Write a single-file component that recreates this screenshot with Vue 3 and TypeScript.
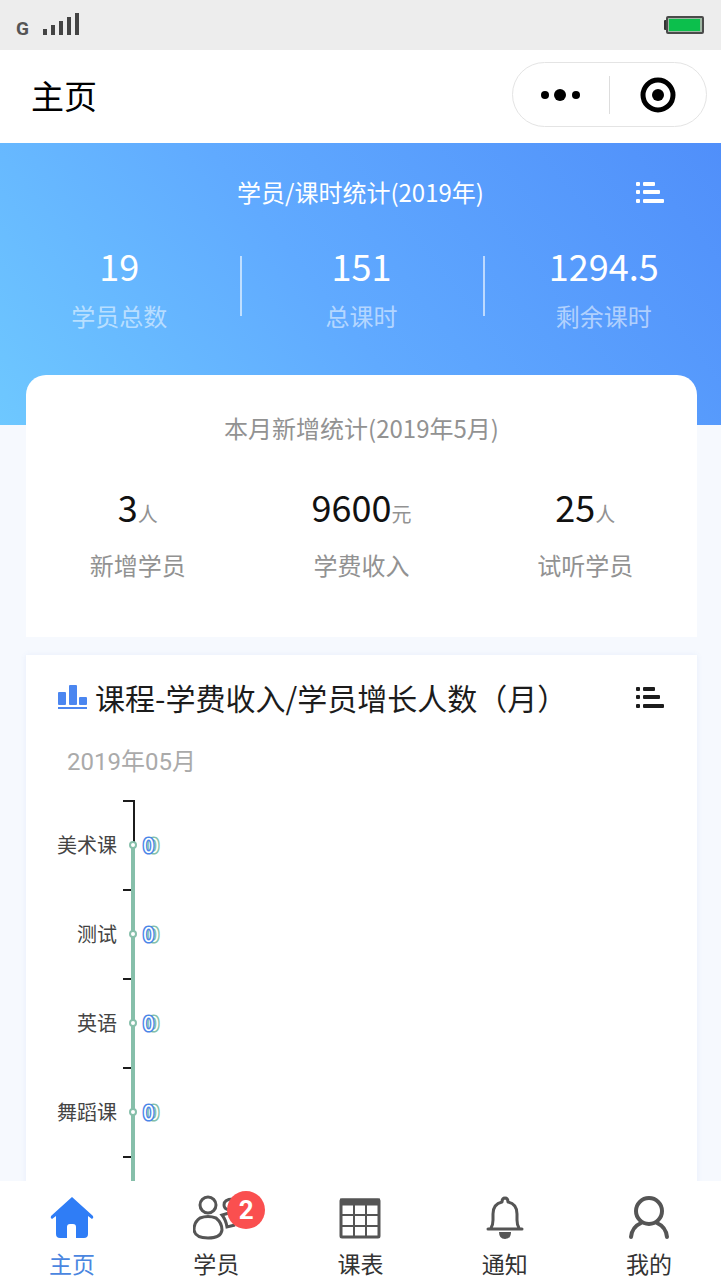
<script setup lang="ts">
interface Stat { value: string; label: string; unit?: string }
interface Tab { key: string; label: string; badge?: number }

const totals: Stat[] = [
  { value: '19', label: '学员总数' },
  { value: '151', label: '总课时' },
  { value: '1294.5', label: '剩余课时' },
]
const monthly: Stat[] = [
  { value: '3', unit: '人', label: '新增学员' },
  { value: '9600', unit: '元', label: '学费收入' },
  { value: '25', unit: '人', label: '试听学员' },
]
const tabs: Tab[] = [
  { key: 'home', label: '主页' },
  { key: 'students', label: '学员', badge: 2 },
  { key: 'schedule', label: '课表' },
  { key: 'notice', label: '通知' },
  { key: 'mine', label: '我的' },
]

const step = 89
const top = 16
const courses = ['美术课', '测试', '英语', '舞蹈课'].map((name, i) => ({
  name,
  income: 0,
  growth: 0,
  tick: top + i * step,
  mid: top + i * step + 44,
}))
const lastTick = top + courses.length * step
</script>

<template>
  <div class="app">
    <div class="status">
      <div class="signal">
        <span class="net">G</span>
        <svg width="38" height="26" viewBox="0 0 38 26" fill="#444">
          <rect x="1" y="17" width="4" height="6" /><rect x="9" y="13" width="4" height="10" />
          <rect x="17" y="9" width="4" height="14" /><rect x="25" y="5" width="4" height="18" />
          <rect x="33" y="1" width="4" height="22" />
        </svg>
      </div>
      <svg width="42" height="20" viewBox="0 0 42 20">
        <rect x="1" y="5" width="4" height="10" rx="1" fill="#333" />
        <rect x="4" y="2" width="36" height="16" rx="1" fill="#9fb8a4" stroke="#4a4a4a" stroke-width="2" />
        <rect x="6" y="4" width="31" height="12" fill="#0cbf4c" />
      </svg>
    </div>

    <header class="nav">
      <h1>主页</h1>
      <div class="capsule">
        <button type="button" aria-label="更多">
          <svg width="40" height="16" viewBox="0 0 40 16"><circle cx="4" cy="8" r="4" /><circle cx="19" cy="8" r="6" /><circle cx="35" cy="8" r="4" /></svg>
        </button>
        <button type="button" aria-label="关闭">
          <svg width="36" height="36" viewBox="0 0 36 36"><circle cx="18" cy="18" r="15" fill="none" stroke="#000" stroke-width="5" /><circle cx="18" cy="18" r="6" /></svg>
        </button>
      </div>
    </header>

    <main>
      <section class="hero">
        <div class="hero-head">
          <h2>学员/课时统计(2019年)</h2>
          <button type="button" class="list-btn" aria-label="列表">
            <svg width="30" height="24" viewBox="0 0 30 24" fill="currentColor">
              <rect x="1" y="2" width="4" height="4" rx="1" /><rect x="8" y="2" width="12" height="4" rx="1" />
              <rect x="1" y="10" width="4" height="4" rx="1" /><rect x="8" y="10" width="17" height="4" rx="1" />
              <rect x="1" y="19" width="4" height="4" rx="1" /><rect x="8" y="19" width="21" height="4" rx="1" />
            </svg>
          </button>
        </div>
        <div class="stats">
          <div v-for="s in totals" :key="s.label" class="stat">
            <strong>{{ s.value }}</strong>
            <span class="label">{{ s.label }}</span>
          </div>
        </div>
      </section>

      <section class="card month">
        <h2>本月新增统计(2019年5月)</h2>
        <div class="stats">
          <div v-for="s in monthly" :key="s.label" class="stat">
            <div class="figure"><strong>{{ s.value }}</strong><small>{{ s.unit }}</small></div>
            <span class="label">{{ s.label }}</span>
          </div>
        </div>
      </section>

      <section class="card course">
        <div class="course-head">
          <svg width="30" height="28" viewBox="0 0 30 28" fill="#4b86f0">
            <rect x="1" y="9" width="8" height="13" rx="1" /><rect x="12" y="2" width="8" height="20" rx="1" />
            <rect x="22" y="14" width="8" height="8" rx="1" /><rect x="1" y="24" width="29" height="2" />
          </svg>
          <h2>课程-学费收入/学员增长人数（月）</h2>
          <button type="button" class="list-btn" aria-label="列表">
            <svg width="30" height="24" viewBox="0 0 30 24" fill="currentColor">
              <rect x="1" y="2" width="4" height="4" rx="1" /><rect x="8" y="2" width="12" height="4" rx="1" />
              <rect x="1" y="10" width="4" height="4" rx="1" /><rect x="8" y="10" width="17" height="4" rx="1" />
              <rect x="1" y="19" width="4" height="4" rx="1" /><rect x="8" y="19" width="21" height="4" rx="1" />
            </svg>
          </button>
        </div>
        <p class="date">2019年05月</p>
        <svg class="chart" width="100%" height="440" role="img" aria-label="课程统计">
          <path :d="`M108 ${top - 1}V440`" stroke="#1c1c1c" stroke-width="2" />
          <path v-for="c in courses" :key="c.tick" :d="`M97 ${c.tick}H107`" stroke="#1c1c1c" stroke-width="2" />
          <path :d="`M97 ${lastTick}H107`" stroke="#1c1c1c" stroke-width="2" />
          <path :d="`M107 ${courses[0].mid}V440`" stroke="#86bfaa" stroke-width="4" />
          <g v-for="c in courses" :key="c.name">
            <text x="91" :y="c.mid + 8" class="axis" text-anchor="end">{{ c.name }}</text>
            <circle cx="107" :cy="c.mid" r="3" fill="#fff" stroke="#86bfaa" stroke-width="2" />
            <text x="122" :y="c.mid + 8" class="value growth">{{ c.growth }}</text>
            <text x="117" :y="c.mid + 8" class="value income">{{ c.income }}</text>
          </g>
        </svg>
      </section>
    </main>

    <nav class="tabs">
      <a v-for="t in tabs" :key="t.key" href="#" :class="{ active: t.key === 'home' }">
        <span class="icon">
          <svg v-if="t.key === 'home'" width="46" height="46" viewBox="0 0 46 46">
            <path d="M23 2 2 21Q1 23 3 24L7 21V39Q7 43 11 43H18V32Q18 29 21 29H24Q27 29 27 32V43H35Q39 43 39 39V21L43 24Q45 23 44 21Z" fill="#2f7df6" />
          </svg>
          <svg v-else-if="t.key === 'students'" width="46" height="46" viewBox="0 0 46 46" fill="none" stroke="#555" stroke-width="3">
            <circle cx="15" cy="10" r="8" />
            <path d="M7 23Q15 20 23 23Q29 28 29 35Q28 43 15 43Q2 43 1 35Q1 27 7 23Z" />
            <path d="M40 4Q31 4 31 10Q31 14 36 15M36 18 29 20Q33 25 34 32L42 30" />
          </svg>
          <svg v-else-if="t.key === 'schedule'" width="46" height="46" viewBox="0 0 46 46" fill="none" stroke="#555">
            <rect x="4" y="5" width="38" height="37" rx="1" stroke-width="3" />
            <path d="M3 7H43" stroke-width="7" />
            <path d="M4 20H42M4 31H42M17 9V42M29 9V42" stroke-width="2" />
          </svg>
          <svg v-else-if="t.key === 'notice'" width="46" height="46" viewBox="0 0 46 46" fill="none" stroke="#555" stroke-width="3" stroke-linejoin="round">
            <path d="M6 34H40M9 33Q11 30 11 25V19Q11 9 20 7Q20 3 23 3Q26 3 26 7Q35 9 35 19V25Q35 30 37 33" stroke-linecap="round" />
            <path d="M17 37H29Q29 44 23 44Q17 44 17 37Z" fill="#555" stroke="none" />
          </svg>
          <svg v-else width="46" height="46" viewBox="0 0 46 46" fill="none" stroke="#555" stroke-width="4" stroke-linecap="round">
            <circle cx="23" cy="16" r="13" /><path d="M15 28Q6 32 5 42M31 28Q40 32 41 42" />
          </svg>
          <span v-if="t.badge" class="badge">{{ t.badge }}</span>
        </span>
        <span>{{ t.label }}</span>
      </a>
    </nav>
  </div>
</template>

<style>
body { margin: 0; }
</style>

<style scoped>
.app { height: 100vh; display: flex; flex-direction: column; overflow: hidden; background: #f6f9fe; color: #1c1c1c; font-family: "Noto Sans CJK SC", sans-serif; }
h1, h2, p { margin: 0; font-weight: 400; }
strong { font-weight: 400; }
button { border: 0; padding: 0; background: none; color: inherit; font: inherit; display: flex; align-items: center; justify-content: center; }
svg { display: block; flex: none; }
.status { flex: none; box-sizing: border-box; height: 50px; padding: 0 16px; background: #ededed; display: flex; align-items: center; justify-content: space-between; }
.signal { display: flex; align-items: flex-end; gap: 13px; }
.net { font: 700 19px/18px Roboto, sans-serif; color: #555; }
.nav { flex: none; box-sizing: border-box; height: 93px; padding: 0 14px 4px 31px; background: #fff; display: flex; align-items: center; justify-content: space-between; }
h1 { font-size: 33px; line-height: 48px; color: #000; }
.capsule { box-sizing: border-box; width: 195px; height: 65px; border: 1px solid #e4e4e4; border-radius: 33px; display: flex; align-items: center; }
.capsule button { flex: 1; height: 38px; }
.capsule button + button { border-left: 1px solid #ddd; }
main { flex: 1; min-height: 0; overflow: hidden; }
.hero { box-sizing: border-box; height: 282px; padding-top: 31px; color: #fff; background: linear-gradient(52deg, #6ec8ff 0%, #60aaff 45%, #508ffa 100%); }
.hero-head { display: grid; grid-template-columns: 1fr auto 1fr; align-items: center; }
.hero-head h2 { grid-column: 2; font-size: 24px; line-height: 36px; }
.hero-head .list-btn { justify-self: end; margin-right: 56px; }
.stats { display: grid; grid-template-columns: repeat(3, 1fr); }
.hero .stats { margin: 27px -4px 0 -2px; }
.stat { display: flex; flex-direction: column; align-items: center; }
.hero .stat { position: relative; }
.hero .stat + .stat::before { content: ""; position: absolute; left: 0; top: 19px; width: 2px; height: 60px; background: rgba(255, 255, 255, 0.6); }
.stat strong { font-size: 36px; line-height: 56px; }
.label { font-size: 24px; line-height: 36px; }
.hero .label { margin-top: 5px; color: rgba(255, 255, 255, 0.55); }
.card { margin: 0 24px 0 26px; background: #fff; box-shadow: 0 0 6px rgba(70, 120, 220, 0.08); }
.month { position: relative; box-sizing: border-box; height: 262px; margin-top: -50px; padding-top: 35px; border-radius: 20px 20px 0 0; box-shadow: none; color: #929292; }
.month h2 { font-size: 24px; line-height: 36px; text-align: center; }
.month .stats { margin-top: 32px; }
.month strong { color: #111; }
.figure { display: flex; align-items: baseline; }
small { font-size: 20px; line-height: 30px; }
.month .label { margin-top: 13px; }
.course { margin-top: 18px; padding-top: 19px; }
.course-head { display: flex; align-items: center; padding: 0 32px 0 31px; gap: 8px; }
.course-head h2 { font-size: 30px; line-height: 46px; white-space: nowrap; }
.course-head .list-btn { margin-left: auto; }
.date { margin: 24px 0 0 41px; font: 24px/36px Roboto, "Noto Sans CJK SC", sans-serif; color: #aaa; }
.chart { margin-top: 5px; }
.axis { font-size: 20px; fill: #444; }
.value { font-size: 20px; fill: #fff; stroke-width: 3px; paint-order: stroke; }
.growth { stroke: #86bfaa; }
.income { stroke: #4b86e8; }
.tabs { flex: none; height: 100px; background: #fff; display: grid; grid-template-columns: repeat(5, 1fr); }
.tabs a { display: flex; flex-direction: column; align-items: center; padding-top: 14px; color: #333; font-size: 23px; line-height: 34px; text-decoration: none; }
.tabs .active { color: #4a86e0; }
.icon { position: relative; margin-bottom: 5px; }
.badge { position: absolute; left: 34px; top: -4px; width: 38px; height: 38px; border-radius: 50%; background: #fa4f4f; color: #fff; font: 700 26px/38px Roboto, sans-serif; text-align: center; }
</style>
